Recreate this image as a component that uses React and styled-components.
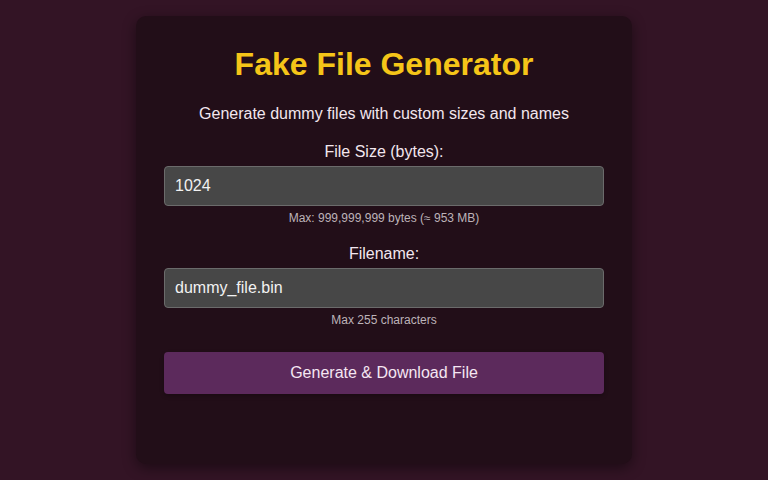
import React from 'react';
import styled, { createGlobalStyle } from 'styled-components';

const Global = createGlobalStyle`
  html, body {
    margin: 0;
    padding: 0;
    background: #331425;
    font-family: "Liberation Sans", Arial, sans-serif;
  }
`;

const Page = styled.div`
  display: flex;
  justify-content: center;
  padding-top: 16px;
  min-height: 480px;
  box-sizing: border-box;
`;

const Card = styled.div`
  width: 496px;
  height: 448px;
  box-sizing: border-box;
  padding: 28px;
  background: #220e18;
  border-radius: 10px;
  box-shadow: 0 4px 14px rgba(0, 0, 0, 0.45);
  display: flex;
  flex-direction: column;
  align-items: stretch;
  text-align: center;
`;

const Title = styled.h1`
  margin: 0;
  font-size: 32px;
  line-height: 40px;
  font-weight: bold;
  color: #f5c518;
`;

const Subtitle = styled.p`
  margin: 21px 0 0;
  font-size: 16px;
  line-height: 18px;
  color: #f2e6ee;
`;

const Field = styled.div`
  display: flex;
  flex-direction: column;
  margin-top: 20px;
`;

const Label = styled.label`
  font-size: 16px;
  line-height: 18px;
  color: #f2e6ee;
`;

const Input = styled.input`
  margin-top: 5px;
  height: 40px;
  box-sizing: border-box;
  padding: 0 10px;
  background: #474747;
  border: 1px solid #6b6b6b;
  border-radius: 4px;
  color: #f2f2f2;
  font-family: "Liberation Sans", Arial, sans-serif;
  font-size: 16px;
  outline: none;
`;

const Hint = styled.small`
  margin-top: 5px;
  font-size: 12px;
  line-height: 14px;
  color: #bdb3b8;
`;

const Button = styled.button`
  margin-top: 25px;
  height: 42px;
  border: 0;
  border-radius: 4px;
  background: #5c2a5c;
  color: #f5e6f2;
  font-family: "Liberation Sans", Arial, sans-serif;
  font-size: 16px;
  cursor: pointer;
  box-shadow: 0 2px 4px rgba(0, 0, 0, 0.25);
`;

export default function App() {
  const [size, setSize] = React.useState('1024');
  const [name, setName] = React.useState('dummy_file.bin');

  return (
    <>
      <Global />
      <Page>
        <Card>
          <Title>Fake File Generator</Title>
          <Subtitle>Generate dummy files with custom sizes and names</Subtitle>
          <Field>
            <Label htmlFor="size">File Size (bytes):</Label>
            <Input id="size" value={size} onChange={(e) => setSize(e.target.value)} />
            <Hint>Max: 999,999,999 bytes (≈ 953 MB)</Hint>
          </Field>
          <Field>
            <Label htmlFor="name">Filename:</Label>
            <Input id="name" value={name} onChange={(e) => setName(e.target.value)} />
            <Hint>Max 255 characters</Hint>
          </Field>
          <Button type="button">Generate &amp; Download File</Button>
        </Card>
      </Page>
    </>
  );
}
